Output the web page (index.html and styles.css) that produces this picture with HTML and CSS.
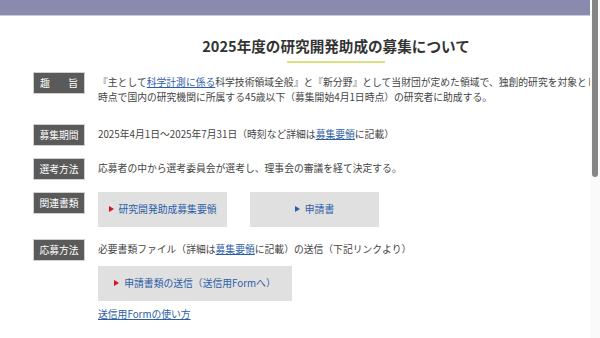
FILE: index.html
```html
<!DOCTYPE html>
<html lang="ja">
<head>
  <meta charset="UTF-8">
  <meta name="viewport" content="width=device-width, initial-scale=1">
  <title>2025年度の研究開発助成の募集について</title>
  <link rel="stylesheet" href="styles.css">
</head>
<body>

<div class="page">
  <div class="topbar"></div>

  <div class="container">
    <div class="header">
      <h1>2025年度の研究開発助成の募集について</h1>
    </div>

    <div class="rows">
      <div class="row row-first">
        <div class="label label-spread"><span>趣</span><span>旨</span></div>
        <div class="body">
          <p class="nowrap">『主として<a href="#">科学計測に係る</a>科学技術領域全般』と『新分野』として当財団が定めた領域で、独創的研究を対象とし、応募<br>時点で国内の研究機関に所属する45歳以下（募集開始4月1日時点）の研究者に助成する。</p>
        </div>
      </div>

      <div class="row">
        <div class="label">募集期間</div>
        <div class="body">
          <p>2025年4月1日～2025年7月31日（時刻など詳細は<a href="#">募集要領</a>に記載）</p>
        </div>
      </div>

      <div class="row">
        <div class="label">選考方法</div>
        <div class="body">
          <p>応募者の中から選考委員会が選考し、理事会の審議を経て決定する。</p>
        </div>
      </div>

      <div class="row">
        <div class="label">関連書類</div>
        <div class="body">
          <div class="buttons">
            <a class="btn" href="#"><span class="arrow"></span>研究開発助成募集要領</a>
            <a class="btn" href="#"><span class="arrow arrow-blue"></span>申請書</a>
          </div>
        </div>
      </div>

      <div class="row">
        <div class="label">応募方法</div>
        <div class="body">
          <p>必要書類ファイル（詳細は<a href="#">募集要領</a>に記載）の送信（下記リンクより）</p>
          <a class="btn btn-wide" href="#"><span class="arrow"></span>申請書類の送信（送信用Formへ）</a>
          <p class="howto"><a href="#">送信用Formの使い方</a></p>
        </div>
      </div>
    </div>
  </div>
</div>

<!-- window scrollbar -->
<div class="scrollbar"><div class="thumb"></div></div>

</body>
</html>
```

FILE: styles.css
```css
body {
  font-family: "Noto Sans CJK JP", "Noto Sans", sans-serif;
  font-size: 9.8px;
  color: #444;
  background: #fff;
  margin: 0;
}
a {
  color: #2c5ea6;
}
p {
  margin: 0;
}
.page {
  width: 590px;
  height: 650px;
  overflow: hidden;
}
.topbar {
  height: 15px;
  background: #8a8aae;
  border-bottom: 1px solid #c9c9dc;
}
.container {
  width: 606px;
  margin-left: 33px;
}
.header {
  text-align: center;
  padding-top: 21px;
}
.header h1 {
  display: inline-block;
  margin: 0;
  font-size: 14.6px;
  font-weight: bold;
  color: #333;
  line-height: 18px;
  padding-bottom: 7px;
}
.header h1::after {
  content: "";
  display: block;
  width: 98px;
  height: 2px;
  background: #d7e37e;
  margin: 6px auto 0;
}
.rows {
  margin-top: 2px;
  display: flex;
  flex-direction: column;
  gap: 12px;
}
.row {
  display: flex;
  gap: 13px;
  align-items: flex-start;
}
.row-first {
  margin-bottom: 7px;
}
.label {
  flex: none;
  width: 52px;
  height: 22px;
  box-sizing: border-box;
  background: #5a5a5a;
  border: 1px solid #d0d0d0;
  color: #fff;
  display: flex;
  align-items: center;
  justify-content: center;
}
.label-spread {
  justify-content: space-between;
  padding: 0 6px;
}
.body {
  line-height: 15px;
  padding-top: 3px;
}
.nowrap {
  white-space: nowrap;
}
.buttons {
  display: flex;
  gap: 23px;
  margin-top: -3px;
}
.btn {
  width: 129px;
  height: 35px;
  background: #e0e0e0;
  color: #2c5ea6;
  text-decoration: none;
  display: flex;
  align-items: center;
  justify-content: center;
  gap: 5px;
}
.btn-wide {
  width: 194px;
  margin-top: 9px;
}
.arrow {
  width: 0;
  height: 0;
  border-left: 5px solid #d8141c;
  border-top: 3.5px solid transparent;
  border-bottom: 3.5px solid transparent;
  margin-top: -2px;
}
.arrow-blue {
  border-left-color: #2c5ea6;
}
.howto {
  margin-top: 6px;
}
.scrollbar {
  position: fixed;
  top: 0;
  right: 0;
  width: 10px;
  height: 100%;
  background: #fafafa;
}
.thumb {
  width: 6px;
  height: 177px;
  margin-left: 2px;
  background: #858585;
  border-radius: 0 0 3px 3px;
}
```
